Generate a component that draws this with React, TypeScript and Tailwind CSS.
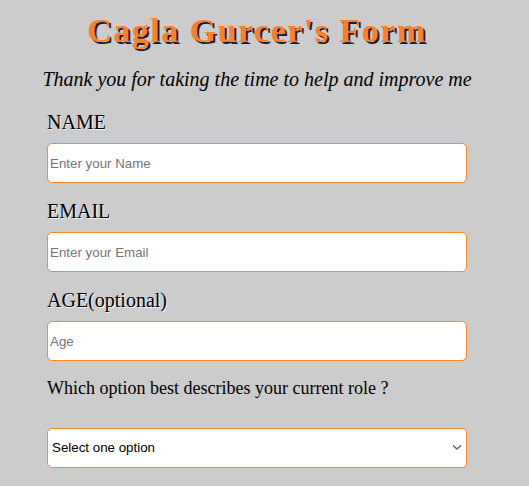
import React from "react";

export default function App() {
  const serif = { fontFamily: '"Liberation Serif", serif' } as React.CSSProperties;
  const labelCls =
    "block text-[20px] leading-[23px] text-black [text-shadow:1px_1px_0_#eef4ff]";
  const inputCls =
    "block w-[420px] h-[40px] rounded-[5px] border border-[#ff8a26] bg-white px-[2px] text-[13.33px] text-black placeholder:text-[#757575] outline-none";
  return (
    <div className="min-h-[486px] w-full bg-[#cccccc]" style={serif}>
      <div className="w-[514px] pt-[11px]">
        <h1 className="text-center text-[34px] font-bold leading-[39px] tracking-[1.5px] text-[#ff7f27] [text-shadow:2px_2px_0_#1d1d2b]">
          Cagla Gurcer's Form
        </h1>
        <p className="mt-[18px] text-center text-[20px] italic leading-[23px] text-black">
          Thank you for taking the time to help and improve me
        </p>
      </div>
      <form className="ml-[47px] mt-[20px] w-[420px]">
        <label className={labelCls}>NAME</label>
        <input
          className={inputCls + " mt-[9px]"}
          style={{ fontFamily: '"Liberation Sans", Arial, sans-serif' }}
          placeholder="Enter your Name"
        />
        <label className={labelCls + " mt-[17px]"}>EMAIL</label>
        <input
          className={inputCls + " mt-[9px]"}
          style={{ fontFamily: '"Liberation Sans", Arial, sans-serif' }}
          placeholder="Enter your Email"
        />
        <label className={labelCls + " mt-[17px]"}>AGE(optional)</label>
        <input
          className={inputCls + " mt-[9px]"}
          style={{ fontFamily: '"Liberation Sans", Arial, sans-serif' }}
          placeholder="Age"
        />
        <p className="mt-[17px] text-[18px] leading-[21px] text-black">
          Which option best describes your current role ?
        </p>
        <div className="relative mt-[29px] w-[420px]">
          <select
            className="block h-[40px] w-[420px] appearance-none rounded-[5px] border border-[#ff8a26] bg-white pl-[4px] text-[13.33px] text-black outline-none"
            style={{ fontFamily: '"Liberation Sans", Arial, sans-serif' }}
            defaultValue=""
          >
            <option value="">Select one option</option>
          </select>
          <svg
            className="pointer-events-none absolute right-[5px] top-[16px]"
            width="10"
            height="7"
            viewBox="0 0 10 7"
          >
            <path d="M1 1.5 L5 5 L9 1.5" fill="none" stroke="#6b6b6b" strokeWidth="1.6" />
          </svg>
        </div>
      </form>
    </div>
  );
}
